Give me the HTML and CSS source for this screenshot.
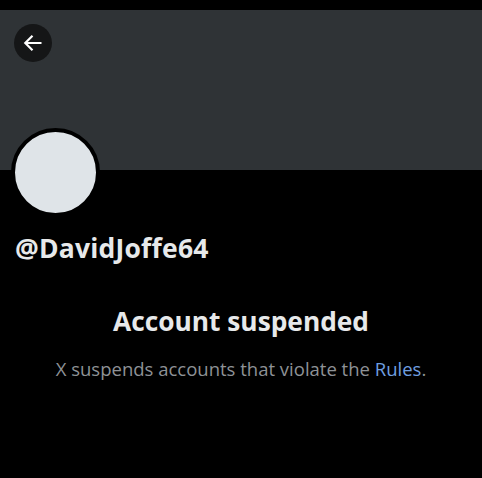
FILE: index.html
```html
<!DOCTYPE html>
<html lang="en">
<head>
<meta charset="utf-8">
<title>@DavidJoffe64</title>
<link rel="stylesheet" href="styles.css">
</head>
<body>
<div class="page">
  <div class="banner">
    <button class="back" aria-label="Back">
      <svg viewBox="0 0 24 24" width="24" height="24"><path d="M20.5 12H4.5M11.5 4.8L4.3 12l7.2 7.2" fill="none" stroke="#fff" stroke-width="2.2"/></svg>
    </button>
  </div>
  <div class="profile">
    <div class="avatar"></div>
    <div class="handle">@DavidJoffe64</div>
  </div>
  <div class="notice">
    <h1 class="title">Account suspended</h1>
    <p class="desc">X suspends accounts that violate the <span class="link">Rules</span>.</p>
  </div>
</div>
</body>
</html>
```
FILE: styles.css
```css
* { box-sizing: border-box; }
html, body { margin: 0; padding: 0; background: #000; }
body { font-family: "Open Sans", "Liberation Sans", sans-serif; color: #e7e9ea; }
.page { width: 482px; height: 478px; padding-top: 10px; overflow: hidden; }
.banner { height: 160px; background: #2f3336; padding: 14px 0 0 14px; }
.back {
  width: 38px; height: 38px; border-radius: 50%; border: 0; padding: 0;
  background: #151617; display: flex; align-items: center; justify-content: center;
}
.profile { padding-left: 11px; }
.avatar {
  width: 89px; height: 89px; border-radius: 50%; margin-top: -42px;
  background: #dfe4e8; border: 4px solid #000;
}
.handle { margin: 14px 0 0 4px; font-size: 26.5px; font-weight: 700; line-height: 34px; letter-spacing: 0.2px; }
.notice { text-align: center; margin-top: 39px; }
.title { margin: 0; font-size: 26.3px; font-weight: 700; line-height: 34px; }
.desc { margin: 18px 0 0; font-size: 18.5px; line-height: 26px; color: #8e9296; }
.link { color: #6f9fe0; }
```
